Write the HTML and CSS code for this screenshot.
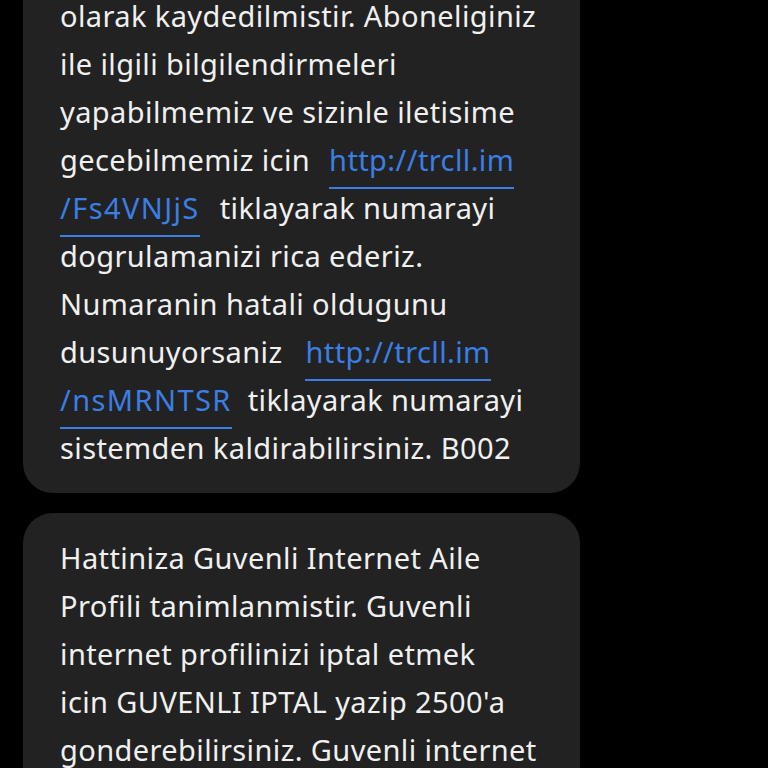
FILE: index.html
```html
<!DOCTYPE html>
<html lang="tr">
<head>
<meta charset="utf-8">
<link rel="stylesheet" href="styles.css">
</head>
<body>
<div class="thread">
  <div class="bubble first">
    <div class="line">olarak kaydedilmistir. Aboneliginiz</div>
    <div class="line">ile ilgili bilgilendirmeleri</div>
    <div class="line">yapabilmemiz ve sizinle iletisime</div>
    <div class="line">gecebilmemiz icin <span class="link gap-a">http://trcll.im</span></div>
    <div class="line"><span class="link short">/Fs4VNJjS</span><span class="after-a">tiklayarak numarayi</span></div>
    <div class="line">dogrulamanizi rica ederiz.</div>
    <div class="line">Numaranin hatali oldugunu</div>
    <div class="line">dusunuyorsaniz <span class="link gap-b">http://trcll.im</span></div>
    <div class="line"><span class="link short">/nsMRNTSR</span><span class="after-b">tiklayarak numarayi</span></div>
    <div class="line">sistemden kaldirabilirsiniz. B002</div>
  </div>
  <div class="bubble">
    <div class="line">Hattiniza Guvenli Internet Aile</div>
    <div class="line">Profili tanimlanmistir. Guvenli</div>
    <div class="line">internet profilinizi iptal etmek</div>
    <div class="line">icin GUVENLI IPTAL yazip 2500'a</div>
    <div class="line">gonderebilirsiniz. Guvenli internet</div>
  </div>
</div>
</body>
</html>
```
FILE: styles.css
```css
html, body {
  margin: 0;
  padding: 0;
  background: #000;
  height: 768px;
  overflow: hidden;
}
.thread {
  display: flex;
  flex-direction: column;
  gap: 20px;
  margin-top: -8px;
}
.bubble {
  margin-left: 23px;
  width: 557px;
  box-sizing: border-box;
  background: #222222;
  border-radius: 30px;
  padding: 21px 10px 21px 37px;
  color: #f0f0f0;
  font-family: "Noto Sans", "Open Sans", sans-serif;
  font-size: 29px;
  letter-spacing: 0.4px;
  line-height: 48px;
}
.bubble.first {
  padding-top: 0;
  border-top-left-radius: 0;
  border-top-right-radius: 0;
}
.line {
  white-space: nowrap;
}
.link {
  color: #3b7ee4;
  border-bottom: 2px solid #3b7ee4;
  padding-bottom: 8px;
}
.link.short {
  letter-spacing: 1.4px;
}
.gap-a { margin-left: 11px; }
.gap-b { margin-left: 15px; }
.after-a { margin-left: 20px; }
.after-b { margin-left: 16px; }
```
